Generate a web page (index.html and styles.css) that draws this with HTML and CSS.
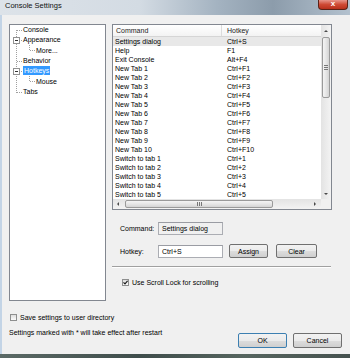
FILE: index.html
```html
<!DOCTYPE html>
<html lang="en">

<head>
    <meta charset="UTF-8">
    <meta name="viewport" content="width=device-width, initial-scale=1.0">
    <title>Console Settings</title>
    <link rel="stylesheet" href="styles.css">
</head>

<body>
    <div class="window">
        <div class="titlebar">
            <span class="title">Console Settings</span>
            <div class="close">x</div>
        </div>

        <div class="client">
            <div class="main">
                <!-- settings tree -->
                <div class="tree">
                    <svg class="tree-lines" width="95" height="75" viewBox="0 0 95 75">
                        <g stroke="#a0a0a0" stroke-dasharray="1 1" shape-rendering="crispEdges">
                            <line x1="6.5" y1="5" x2="6.5" y2="68" />
                            <line x1="6.5" y1="5.5" x2="12" y2="5.5" />
                            <line x1="9" y1="15.5" x2="12" y2="15.5" />
                            <line x1="6.5" y1="36.5" x2="12" y2="36.5" />
                            <line x1="9" y1="46.5" x2="12" y2="46.5" />
                            <line x1="6.5" y1="67.5" x2="12" y2="67.5" />
                            <line x1="19.5" y1="20" x2="19.5" y2="26" />
                            <line x1="19.5" y1="25.5" x2="25" y2="25.5" />
                            <line x1="19.5" y1="51" x2="19.5" y2="57" />
                            <line x1="19.5" y1="56.5" x2="25" y2="56.5" />
                        </g>
                        <g stroke="#919191" fill="#fff" shape-rendering="crispEdges">
                            <rect x="3.5" y="12.5" width="6" height="6" />
                            <rect x="3.5" y="43.5" width="6" height="6" />
                        </g>
                        <g stroke="#333">
                            <line x1="5" y1="15.5" x2="8" y2="15.5" />
                            <line x1="5" y1="46.5" x2="8" y2="46.5" />
                        </g>
                    </svg>
                    <div class="tree-item">Console</div>
                    <div class="tree-item">Appearance</div>
                    <div class="tree-item child">More...</div>
                    <div class="tree-item">Behavior</div>
                    <div class="tree-item"><span class="selected">Hotkeys</span></div>
                    <div class="tree-item child">Mouse</div>
                    <div class="tree-item">Tabs</div>
                </div>

                <div class="right">
                    <div class="list">
                        <div class="list-body">
                            <div class="list-head">
                                <div class="c1">Command</div>
                                <div class="c2">Hotkey</div>
                            </div>
                            <div class="row active"><div class="c1">Settings dialog</div><div class="c2">Ctrl+S</div></div>
                            <div class="row"><div class="c1">Help</div><div class="c2">F1</div></div>
                            <div class="row"><div class="c1">Exit Console</div><div class="c2">Alt+F4</div></div>
                            <div class="row"><div class="c1">New Tab 1</div><div class="c2">Ctrl+F1</div></div>
                            <div class="row"><div class="c1">New Tab 2</div><div class="c2">Ctrl+F2</div></div>
                            <div class="row"><div class="c1">New Tab 3</div><div class="c2">Ctrl+F3</div></div>
                            <div class="row"><div class="c1">New Tab 4</div><div class="c2">Ctrl+F4</div></div>
                            <div class="row"><div class="c1">New Tab 5</div><div class="c2">Ctrl+F5</div></div>
                            <div class="row"><div class="c1">New Tab 6</div><div class="c2">Ctrl+F6</div></div>
                            <div class="row"><div class="c1">New Tab 7</div><div class="c2">Ctrl+F7</div></div>
                            <div class="row"><div class="c1">New Tab 8</div><div class="c2">Ctrl+F8</div></div>
                            <div class="row"><div class="c1">New Tab 9</div><div class="c2">Ctrl+F9</div></div>
                            <div class="row"><div class="c1">New Tab 10</div><div class="c2">Ctrl+F10</div></div>
                            <div class="row"><div class="c1">Switch to tab 1</div><div class="c2">Ctrl+1</div></div>
                            <div class="row"><div class="c1">Switch to tab 2</div><div class="c2">Ctrl+2</div></div>
                            <div class="row"><div class="c1">Switch to tab 3</div><div class="c2">Ctrl+3</div></div>
                            <div class="row"><div class="c1">Switch to tab 4</div><div class="c2">Ctrl+4</div></div>
                            <div class="row"><div class="c1">Switch to tab 5</div><div class="c2">Ctrl+5</div></div>
                        </div>
                        <div class="vscroll">
                            <div class="arrow up"><span class="tri-up"></span></div>
                            <div class="thumb"><span class="grip"></span></div>
                            <div class="track"></div>
                            <div class="arrow down"><span class="tri-down"></span></div>
                        </div>
                        <div class="hscroll">
                            <div class="arrow left"><span class="tri-left"></span></div>
                            <div class="thumb"><span class="grip"></span></div>
                            <div class="track"></div>
                            <div class="arrow right"><span class="tri-right"></span></div>
                        </div>
                        <div class="corner"></div>
                    </div>

                    <div class="edit-row">
                        <span class="label">Command:</span>
                        <div class="field readonly">Settings dialog</div>
                    </div>
                    <div class="edit-row second">
                        <span class="label">Hotkey:</span>
                        <div class="field">Ctrl+S</div>
                        <button class="btn assign">Assign</button>
                        <button class="btn clear">Clear</button>
                    </div>

                    <div class="separator"></div>

                    <div class="check-row scroll-lock">
                        <span class="checkbox">
                            <svg width="5" height="5" viewBox="0 0 5 5"><path d="M0.5 2.3 L2 3.8 L4.6 0.8" fill="none" stroke="#1c1c1c" stroke-width="1.2" /></svg>
                        </span>
                        Use Scroll Lock for scrolling
                    </div>
                </div>
            </div>

            <div class="check-row save">
                <span class="checkbox"></span>
                Save settings to user directory
            </div>

            <div class="footer">
                <span class="note">Settings marked with * will take effect after restart</span>
                <div class="footer-buttons">
                    <button class="btn ok">OK</button>
                    <button class="btn cancel">Cancel</button>
                </div>
            </div>
        </div>
        <div class="frame-bottom"></div>
    </div>
</body>

</html>
```

FILE: styles.css
```css
* {
    box-sizing: border-box;
}

body {
    margin: 0;
    padding: 0;
    font-family: "Liberation Sans", Arial, sans-serif;
    font-size: 7px;
    color: #000;
}

.window {
    width: 350px;
    height: 358px;
    overflow: hidden;
    display: flex;
    flex-direction: column;
    background-color: #c3d4e6;
}

.titlebar {
    height: 15px;
    flex: none;
    display: flex;
    justify-content: space-between;
    align-items: flex-start;
    background: linear-gradient(90deg, #dde3e9 0%, #d3dbe3 40%, #a4b3c1 62%, #8c9cab 78%, #b3c1ce 100%);
}

.title {
    font-size: 7.5px;
    line-height: 8px;
    padding: 2px 0 0 5px;
    color: #111;
}

.close {
    width: 30px;
    height: 10px;
    margin-right: 2px;
    border: 1px solid #5b2217;
    border-top: none;
    border-radius: 0 0 4px 4px;
    background: linear-gradient(#e7958a, #cf4a35 50%, #b8301c);
    color: #fff;
    font-size: 8px;
    font-weight: bold;
    line-height: 8px;
    text-align: center;
}

.client {
    flex: 1;
    margin-left: 2px;
    padding: 9px 0 0 7px;
    display: flex;
    flex-direction: column;
    background-color: #f0f0f0;
}

.frame-bottom {
    height: 4px;
    flex: none;
    background: linear-gradient(90deg, #5b6a66, #3f4d4b 40%, #56655f 70%, #46524f);
}

.main {
    display: flex;
    gap: 6px;
    height: 277px;
}

/* tree */

.tree {
    position: relative;
    width: 97px;
    border: 1px solid #828790;
    background-color: #fff;
}

.tree-lines {
    position: absolute;
    left: 0;
    top: 0;
}

.tree-item {
    height: 10.33px;
    line-height: 10.33px;
    padding-left: 13px;
    white-space: nowrap;
}

.tree-item.child {
    padding-left: 26px;
}

.tree-item .selected {
    display: inline-block;
    padding: 0 1px;
    line-height: 9px;
    background-color: #3399ff;
    color: #fff;
}

/* command list */

.right {
    width: 220px;
    display: flex;
    flex-direction: column;
}

.list {
    height: 186px;
    border: 1px solid #828790;
    background-color: #fff;
    display: grid;
    grid-template-columns: 1fr 10px;
    grid-template-rows: 1fr 10px;
    overflow: hidden;
}

.list-body {
    overflow: hidden;
}

.list-head {
    display: flex;
    height: 12px;
    line-height: 11px;
    border-bottom: 1px solid #d5d5d5;
    background: linear-gradient(#ffffff, #f3f3f3);
    color: #222;
}

.list-head .c1 {
    width: 109px;
    padding-left: 3px;
    border-right: 1px solid #dcdcdc;
}

.list-head .c2 {
    padding-left: 5px;
}

.row {
    display: flex;
    height: 9px;
    line-height: 9px;
    white-space: nowrap;
}

.row.active {
    background-color: #e8e8e8;
}

.row .c1 {
    width: 109px;
    padding-left: 2px;
}

.row .c2 {
    padding-left: 5px;
}

.vscroll,
.hscroll {
    display: flex;
    background: linear-gradient(90deg, #e3e3e3, #f3f3f3);
}

.vscroll {
    flex-direction: column;
}

.hscroll {
    background: linear-gradient(#e3e3e3, #f3f3f3);
}

.track {
    flex: 1;
}

.arrow {
    display: flex;
    align-items: center;
    justify-content: center;
}

.vscroll .arrow.up {
    height: 12px;
}

.vscroll .arrow.down {
    height: 10px;
}

.hscroll .arrow.left {
    width: 10px;
}

.hscroll .arrow.right {
    width: 13px;
}

.tri-up,
.tri-down,
.tri-left,
.tri-right {
    width: 0;
    height: 0;
}

.tri-up {
    border-left: 2px solid transparent;
    border-right: 2px solid transparent;
    border-bottom: 2px solid #4a4a4a;
}

.tri-down {
    border-left: 2px solid transparent;
    border-right: 2px solid transparent;
    border-top: 2px solid #4a4a4a;
}

.tri-left {
    border-top: 2px solid transparent;
    border-bottom: 2px solid transparent;
    border-right: 2px solid #4a4a4a;
}

.tri-right {
    border-top: 2px solid transparent;
    border-bottom: 2px solid transparent;
    border-left: 2px solid #4a4a4a;
}

.thumb {
    display: flex;
    align-items: center;
    justify-content: center;
    border: 1px solid #9a9a9a;
    border-radius: 2px;
}

.vscroll .thumb {
    height: 61px;
    margin: 0 1px;
    background: linear-gradient(90deg, #f4f4f4, #e6e6e6 50%, #d4d4d4);
}

.hscroll .thumb {
    width: 148px;
    margin: 1px 0 1px 2px;
    background: linear-gradient(#f4f4f4, #e6e6e6 50%, #d4d4d4);
}

.vscroll .grip {
    width: 4px;
    height: 5px;
    background: repeating-linear-gradient(#777 0 1px, transparent 1px 2px);
}

.hscroll .grip {
    width: 5px;
    height: 4px;
    background: repeating-linear-gradient(90deg, #777 0 1px, transparent 1px 2px);
}

.corner {
    background-color: #f0f0f0;
}

/* edit area */

.edit-row {
    display: flex;
    align-items: center;
    height: 14px;
    margin-top: 11px;
    padding-left: 8px;
}

.edit-row.second {
    margin-top: 9px;
}

.label {
    width: 38px;
}

.field {
    width: 65px;
    height: 13px;
    line-height: 11px;
    padding-left: 3px;
    border: 1px solid #abadb3;
    border-top-color: #9a9ca3;
    background-color: #fff;
}

.field.readonly {
    background-color: #f0f0f0;
}

.btn {
    height: 14px;
    padding: 0;
    border: 1px solid #707070;
    border-radius: 2px;
    background: linear-gradient(#f2f2f2, #ebebeb 50%, #dddddd 51%, #cfcfcf);
    font-family: "Liberation Sans", Arial, sans-serif;
    font-size: 7px;
    color: #000;
}

.btn.assign {
    width: 39px;
    margin-left: 6px;
}

.btn.clear {
    width: 41px;
    margin-left: 8px;
}

.separator {
    width: 219px;
    margin-top: 8px;
    border-top: 1px solid #a0a0a0;
    border-bottom: 1px solid #fff;
}

/* checkboxes */

.check-row {
    display: flex;
    align-items: center;
    gap: 3px;
    height: 10px;
}

.check-row.scroll-lock {
    margin-top: 9px;
    padding-left: 10px;
}

.check-row.save {
    margin-top: 11px;
    padding-left: 1px;
}

.checkbox {
    width: 7px;
    height: 7px;
    display: flex;
    align-items: center;
    justify-content: center;
    border: 1px solid #8e8f8f;
    background: linear-gradient(#dedede, #fbfbfb);
}

/* footer */

.footer {
    display: flex;
    justify-content: space-between;
    align-items: flex-start;
    margin-top: 6px;
    padding-right: 8px;
}

.note {
    line-height: 10px;
}

.footer-buttons {
    display: flex;
    gap: 6px;
    margin-top: 5px;
}

.btn.ok,
.btn.cancel {
    width: 49px;
    height: 15px;
}

.btn.ok {
    border-color: #3c7fb1;
}
```
